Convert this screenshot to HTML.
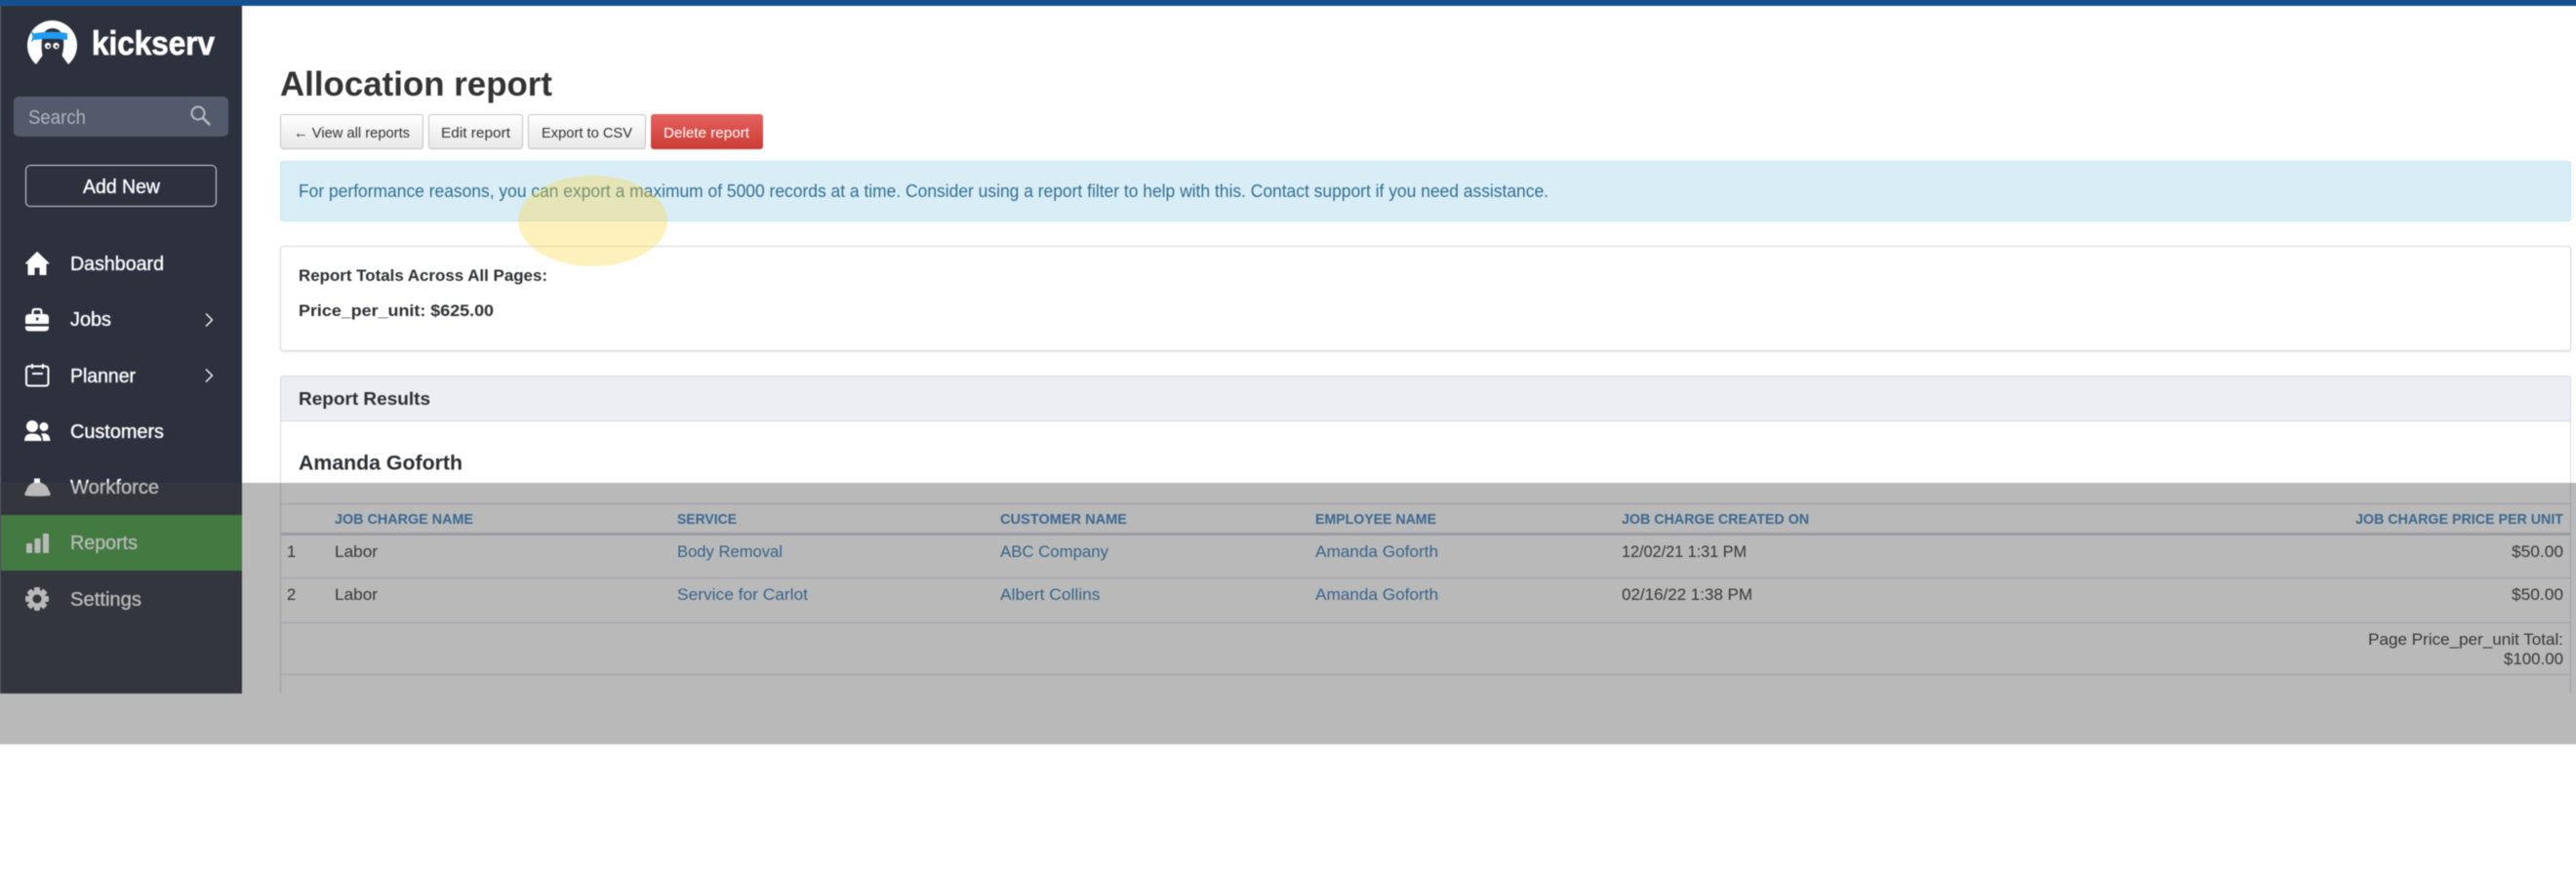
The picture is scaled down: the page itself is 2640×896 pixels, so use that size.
<!DOCTYPE html>
<html lang="en">
<head>
<meta charset="utf-8">
<title>Allocation report</title>
<style>
html,body{margin:0;padding:0;background:#fff;}
body{width:2640px;height:896px;overflow:hidden;position:relative;font-family:"Liberation Sans",sans-serif;}
#page{position:absolute;left:0;top:0;width:2640px;height:896px;filter:blur(.55px);}
.box{position:absolute;box-sizing:border-box;}
svg{position:absolute;left:0;top:0;overflow:visible;}
text{font-family:"Liberation Sans",sans-serif;}
.nav{fill:#fff;font-size:20px;stroke:#fff;stroke-width:.35px;}
.btn{font-size:15px;fill:#333;}
.bd{font-size:16.700px;fill:#333;}
.lk{font-size:16.700px;fill:#337ab7;}
.th{font-size:14.700px;font-weight:bold;fill:#3a80c0;}
.b{font-weight:bold;fill:#2e2f33;}
</style>
</head>
<body>
<div id="page">
  <!-- sidebar -->
  <div class="box" style="left:-12px;top:0;width:260px;height:711px;background:#5a5f6a;"></div>
  <div class="box" style="left:1px;top:0;width:247px;height:711px;background:#2c313d;"></div>
  <!-- top bar -->
  <div class="box" style="left:-12px;top:-12px;width:2664px;height:18px;background:#14508f;"></div>
  <div class="box" style="left:1px;top:528px;width:247px;height:57px;background:#459c42;"></div>
  <div class="box" style="left:14px;top:99px;width:220px;height:41px;background:#535a6b;border-radius:5px;"></div>
  <div class="box" style="left:26px;top:169px;width:196px;height:43px;border:1.5px solid #d4d5d8;border-radius:5px;"></div>

  <!-- buttons -->
  <div class="box" style="left:287px;top:117px;width:147px;height:36px;border:1px solid #c4c4c4;border-radius:3px;background:linear-gradient(#fff,#e8e8e8);"></div>
  <div class="box" style="left:439px;top:117px;width:97px;height:36px;border:1px solid #c4c4c4;border-radius:3px;background:linear-gradient(#fff,#e8e8e8);"></div>
  <div class="box" style="left:541px;top:117px;width:121px;height:36px;border:1px solid #c4c4c4;border-radius:3px;background:linear-gradient(#fff,#e8e8e8);"></div>
  <div class="box" style="left:667px;top:117px;width:115px;height:36px;border-radius:3px;background:linear-gradient(#e4625f,#cd3b35);"></div>

  <!-- alert -->
  <div class="box" style="left:287px;top:165px;width:2348px;height:62px;background:#d9edf7;border:1px solid #bce8f1;border-radius:3px;"></div>

  <!-- totals card -->
  <div class="box" style="left:287px;top:252px;width:2348px;height:108px;background:#fff;border:1px solid #d6d8e6;border-radius:3px;box-shadow:0 1px 2px rgba(0,0,0,.1);"></div>

  <!-- results card (clipped at 711) -->
  <div class="box" style="left:287px;top:385px;width:2348px;height:326px;background:#fff;border:1px solid #d6d8e6;border-bottom:0;border-radius:3px 3px 0 0;"></div>
  <div class="box" style="left:288px;top:386px;width:2346px;height:46px;background:#edeef3;border-bottom:1px solid #d6d8e6;"></div>

  <!-- table rules -->
  <div class="box" style="left:288px;top:515.500px;width:2346px;height:1.500px;background:#d8dae6;"></div>
  <div class="box" style="left:288px;top:546px;width:2346px;height:2.500px;background:#cccedc;"></div>
  <div class="box" style="left:288px;top:592px;width:2346px;height:1px;background:#dcdee8;"></div>
  <div class="box" style="left:288px;top:637.500px;width:2346px;height:1.500px;background:#d8dae6;"></div>
  <div class="box" style="left:288px;top:690.500px;width:2346px;height:1.500px;background:#d8dae6;"></div>

  <svg width="2640" height="896" viewBox="0 0 2640 896" xmlns="http://www.w3.org/2000/svg">
    <!-- logo -->
    <circle cx="53.500" cy="46.500" r="25.500" fill="#fff"/>
    <path d="M43 40Q45 29 54 29Q63 29 65 40Q66 48 63.500 57L70 66L70 75L37 75L37 66L43.500 57Q42 48 43 40Z" fill="#2c313d"/>
    <path d="M34 34.500Q53 31 69 34L69 41Q53 38.500 35 41Z" fill="#1e9cf0"/>
    <path d="M38 37L31.500 31.500L33.500 38L31.500 44Z" fill="#1e9cf0"/>
    <circle cx="49" cy="47" r="3.200" fill="#fff"/><circle cx="49.500" cy="47.500" r="1.300" fill="#2c313d"/>
    <circle cx="57.500" cy="47" r="3.200" fill="#fff"/><circle cx="58" cy="47.500" r="1.300" fill="#2c313d"/>
    <text x="94" y="56" font-size="34" font-weight="bold" fill="#fff" stroke="#fff" stroke-width=".7" textLength="126" lengthAdjust="spacingAndGlyphs">kickserv</text>

    <!-- search -->
    <text x="29" y="127" font-size="20" fill="#aeb2bd" textLength="59" lengthAdjust="spacingAndGlyphs">Search</text>
    <circle cx="203" cy="116" r="6.500" fill="none" stroke="#b7bac4" stroke-width="2"/>
    <path d="M208 121L214.500 127.500" stroke="#b7bac4" stroke-width="2.400" stroke-linecap="round"/>
    <text x="85" y="198" font-size="20" fill="#fff" stroke="#fff" stroke-width=".35" textLength="79" lengthAdjust="spacingAndGlyphs">Add New</text>

    <!-- nav icons -->
    <path d="M38 258.500L50 270L47 270L47 281.500L41 281.500L41 274L35 274L35 281.500L29 281.500L29 270L26.500 270Z" fill="#fff" stroke="#fff" stroke-width="1" stroke-linejoin="round"/>
    <path d="M33.500 323V320Q33.500 317 36 317H40Q42.500 317 42.500 320V323" fill="none" stroke="#fff" stroke-width="2.200"/>
    <path d="M26 326Q26 322 30 322H46Q50 322 50 326V331Q50 332 49 332H27Q26 332 26 331Z" fill="#fff"/>
    <rect x="37" y="325.500" width="2.400" height="3" fill="#2c313d"/>
    <path d="M26 334.500H50V336Q50 339.500 46 339.500H30Q26 339.500 26 336Z" fill="#fff"/>
    <rect x="27" y="375.500" width="22.500" height="20" rx="2.500" fill="none" stroke="#fff" stroke-width="2"/>
    <path d="M33 373V378M44 373V378M33 383H44" stroke="#fff" stroke-width="2" fill="none"/>
    <circle cx="33" cy="437" r="6" fill="#fff"/>
    <circle cx="45" cy="437.500" r="4.500" fill="#fff"/>
    <path d="M25 452Q25 444.500 33 444.500Q42.500 444.500 42.500 452Z" fill="#fff"/>
    <path d="M44 452Q44 447 42 444.800Q43.500 444.200 45 444.200Q51 444.500 51.500 452Z" fill="#fff"/>
    <path d="M25.500 508Q25 505 27 503Q28 497 35 494.500V490.500H41V494.500Q49 497 50 503Q52 505 51.500 508Q38 509.500 25.500 508Z" fill="#fff"/>
    <rect x="27" y="557" width="6" height="10" rx="1" fill="#fff"/>
    <rect x="35.500" y="552" width="6" height="15" rx="1" fill="#fff"/>
    <rect x="44" y="547" width="6" height="20" rx="1" fill="#fff"/>
    <g fill="#fff" transform="translate(38 614)">
      <rect x="-3" y="-12" width="6" height="24" rx="1"/>
      <rect x="-3" y="-12" width="6" height="24" rx="1" transform="rotate(45)"/>
      <rect x="-3" y="-12" width="6" height="24" rx="1" transform="rotate(90)"/>
      <rect x="-3" y="-12" width="6" height="24" rx="1" transform="rotate(135)"/>
      <circle r="9"/>
      <circle r="4.500" fill="#2c313d"/>
    </g>
    <path d="M211 321.500L217.500 328L211 334.500M211 378.500L217.500 385L211 391.500" fill="none" stroke="#fff" stroke-width="1.300"/>

    <!-- nav labels -->
    <text class="nav" x="72" y="277" textLength="96" lengthAdjust="spacingAndGlyphs">Dashboard</text>
    <text class="nav" x="72" y="334" textLength="42" lengthAdjust="spacingAndGlyphs">Jobs</text>
    <text class="nav" x="72" y="392" textLength="67" lengthAdjust="spacingAndGlyphs">Planner</text>
    <text class="nav" x="72" y="449" textLength="96" lengthAdjust="spacingAndGlyphs">Customers</text>
    <text class="nav" x="72" y="506" textLength="91" lengthAdjust="spacingAndGlyphs">Workforce</text>
    <text class="nav" x="72" y="563" textLength="69" lengthAdjust="spacingAndGlyphs">Reports</text>
    <text class="nav" x="72" y="621" textLength="73" lengthAdjust="spacingAndGlyphs">Settings</text>

    <!-- heading -->
    <text x="287" y="98" font-size="35" font-weight="bold" fill="#333" textLength="279" lengthAdjust="spacingAndGlyphs">Allocation report</text>

    <!-- button labels -->
    <text class="btn" x="301" y="141" textLength="119" lengthAdjust="spacingAndGlyphs">← View all reports</text>
    <text class="btn" x="452" y="141" textLength="71" lengthAdjust="spacingAndGlyphs">Edit report</text>
    <text class="btn" x="555" y="141" textLength="93" lengthAdjust="spacingAndGlyphs">Export to CSV</text>
    <text class="btn" x="680" y="141" textLength="88" lengthAdjust="spacingAndGlyphs" style="fill:#fff">Delete report</text>

    <!-- alert -->
    <text x="306" y="202" font-size="18" fill="#31708f" textLength="1281" lengthAdjust="spacingAndGlyphs">For performance reasons, you can export a maximum of 5000 records at a time. Consider using a report filter to help with this. Contact support if you need assistance.</text>

    <!-- totals -->
    <text class="b" x="306" y="288" font-size="17" textLength="255" lengthAdjust="spacingAndGlyphs">Report Totals Across All Pages:</text>
    <text class="b" x="306" y="324" font-size="17" textLength="200" lengthAdjust="spacingAndGlyphs">Price_per_unit: $625.00</text>

    <!-- results -->
    <text class="b" x="306" y="415" font-size="18.500" textLength="135" lengthAdjust="spacingAndGlyphs">Report Results</text>
    <text class="b" x="306" y="481.500" font-size="21" textLength="168" lengthAdjust="spacingAndGlyphs">Amanda Goforth</text>

    <!-- table header -->
    <text class="th" x="343" y="537" textLength="142" lengthAdjust="spacingAndGlyphs">JOB CHARGE NAME</text>
    <text class="th" x="694" y="537" textLength="61" lengthAdjust="spacingAndGlyphs">SERVICE</text>
    <text class="th" x="1025" y="537" textLength="130" lengthAdjust="spacingAndGlyphs">CUSTOMER NAME</text>
    <text class="th" x="1348" y="537" textLength="124" lengthAdjust="spacingAndGlyphs">EMPLOYEE NAME</text>
    <text class="th" x="1662" y="537" textLength="192" lengthAdjust="spacingAndGlyphs">JOB CHARGE CREATED ON</text>
    <text class="th" x="2414" y="537" textLength="213" lengthAdjust="spacingAndGlyphs">JOB CHARGE PRICE PER UNIT</text>

    <!-- rows -->
    <text class="bd" x="294" y="571">1</text>
    <text class="bd" x="343" y="571" textLength="44" lengthAdjust="spacingAndGlyphs">Labor</text>
    <text class="lk" x="694" y="571" textLength="108" lengthAdjust="spacingAndGlyphs">Body Removal</text>
    <text class="lk" x="1025" y="571" textLength="111" lengthAdjust="spacingAndGlyphs">ABC Company</text>
    <text class="lk" x="1348" y="571" textLength="126" lengthAdjust="spacingAndGlyphs">Amanda Goforth</text>
    <text class="bd" x="1662" y="571" textLength="128" lengthAdjust="spacingAndGlyphs">12/02/21 1:31 PM</text>
    <text class="bd" x="2574" y="571" textLength="53" lengthAdjust="spacingAndGlyphs">$50.00</text>

    <text class="bd" x="294" y="615">2</text>
    <text class="bd" x="343" y="615" textLength="44" lengthAdjust="spacingAndGlyphs">Labor</text>
    <text class="lk" x="694" y="615" textLength="134" lengthAdjust="spacingAndGlyphs">Service for Carlot</text>
    <text class="lk" x="1025" y="615" textLength="102.500" lengthAdjust="spacingAndGlyphs">Albert Collins</text>
    <text class="lk" x="1348" y="615" textLength="126" lengthAdjust="spacingAndGlyphs">Amanda Goforth</text>
    <text class="bd" x="1662" y="615" textLength="134" lengthAdjust="spacingAndGlyphs">02/16/22 1:38 PM</text>
    <text class="bd" x="2574" y="615" textLength="53" lengthAdjust="spacingAndGlyphs">$50.00</text>

    <text class="bd" x="2427" y="661" textLength="200" lengthAdjust="spacingAndGlyphs">Page Price_per_unit Total:</text>
    <text class="bd" x="2566" y="681" textLength="61" lengthAdjust="spacingAndGlyphs">$100.00</text>
  </svg>

  <!-- yellow highlight -->
  <div class="box" style="left:531px;top:180px;width:153px;height:93px;border-radius:50%;background:rgba(255,214,60,.34);"></div>
  <!-- grey band -->
  <div class="box" style="left:-12px;top:495px;width:2664px;height:268px;background:rgba(63,63,63,.365);"></div>
</div>
</body>
</html>
